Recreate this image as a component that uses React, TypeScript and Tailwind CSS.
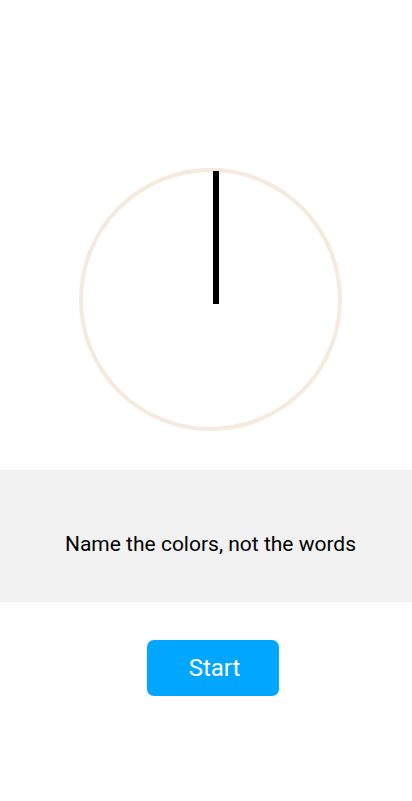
import React from "react";

export default function App() {
  return (
    <div className="w-[412px] h-[801px] bg-white flex flex-col items-center" style={{ fontFamily: "Roboto, 'Noto Sans', sans-serif" }}>
      <div className="mt-[168px] relative w-[263px] h-[263px] mr-auto ml-[79px] rounded-full border-[4px] border-[#f6e9dd]">
        <div className="absolute left-[130px] top-[-1px] w-[6px] h-[133px] bg-black" />
      </div>
      <div className="mt-[39px] w-full h-[132px] bg-[#f2f2f2] flex items-center justify-center pt-[17px] pl-[9px]">
        <span className="text-[21px] text-black">Name the colors, not the words</span>
      </div>
      <button className="mt-[38px] w-[132px] h-[56px] rounded-[7px] bg-[#00a6ff] text-white text-[24px] ml-[14px] pl-[3px]">
        Start
      </button>
    </div>
  );
}
